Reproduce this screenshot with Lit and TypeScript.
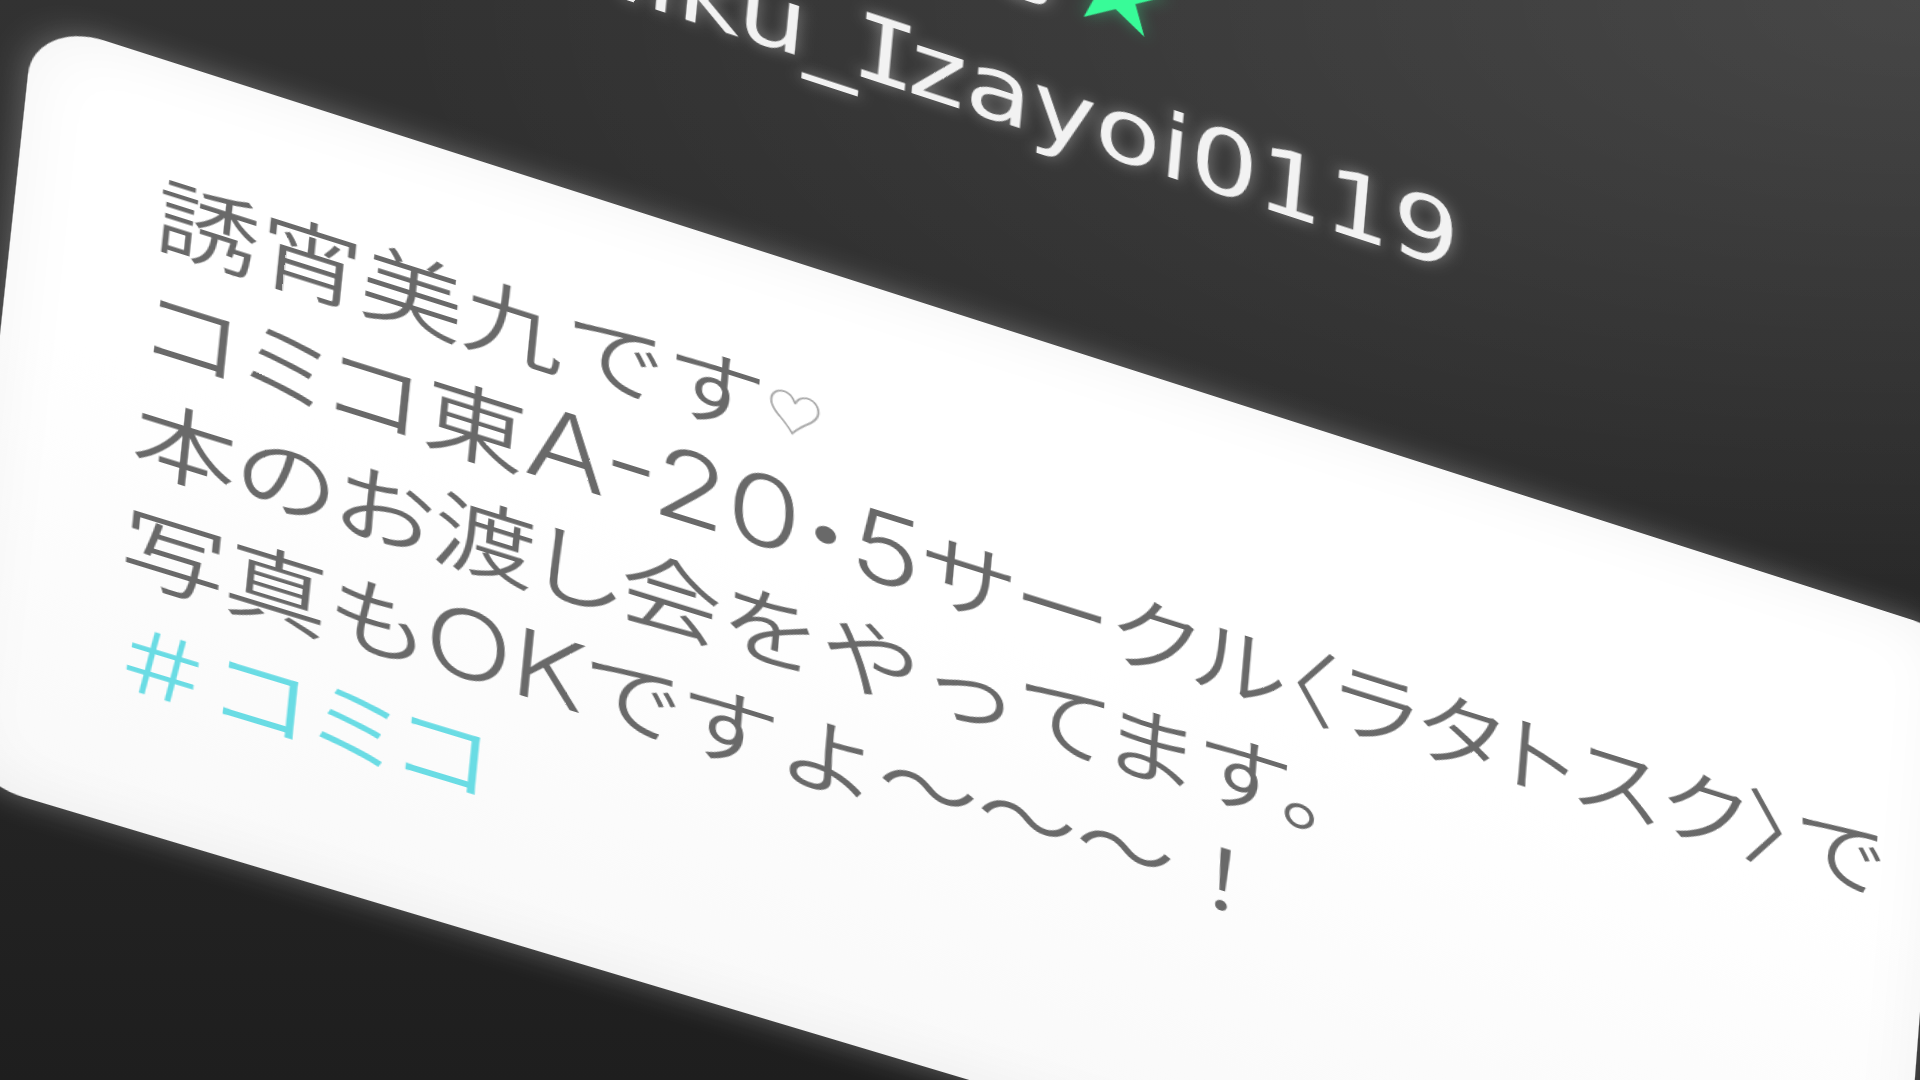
import { LitElement, html, css } from "lit";
import { customElement } from "lit/decorators.js";

@customElement("post-header")
class PostHeader extends LitElement {
  static styles = css`
    :host {
      display: flex;
      flex-direction: column;
      justify-content: flex-end;
      height: 480px;
      padding: 0 0 160px 308px;
      box-sizing: border-box;
      color: #f2f2f2;
      white-space: nowrap;
      text-shadow: 0 0 14px rgba(255, 255, 255, 0.4);
    }
    .name {
      display: flex;
      align-items: baseline;
      gap: 8px;
      margin: 0;
      font: 400 124px/140px "Noto Sans CJK JP", sans-serif;
    }
    .star {
      font-size: 88px;
      color: #38fb98;
      text-shadow: 0 0 14px rgba(56, 251, 152, 0.4);
    }
    .handle {
      margin: 0;
      font: 400 90px/152px "DejaVu Sans", sans-serif;
    }
    .serif-i {
      margin: 0 -7px;
      font-family: "DejaVu Sans Mono", monospace;
    }
  `;

  render() {
    return html`
      <h1 class="name"><span>誘宵美九</span><span class="star">★</span></h1>
      <p class="handle">@Miku_<span class="serif-i">I</span>zayoi0119</p>
    `;
  }
}

@customElement("post-card")
class PostCard extends LitElement {
  static styles = css`
    :host {
      display: block;
      box-sizing: border-box;
      padding: 91px 80px 114px 110px;
      border-radius: 56px 32px 56px 56px;
      background: linear-gradient(180deg, #ffffff 0%, #ffffff 40%, #f9f9f9 100%);
      box-shadow:
        0 0 28px rgba(255, 255, 255, 0.3),
        inset 0 0 60px rgba(0, 0, 0, 0.05);
      color: #696969;
      font: 350 82px/109px "Noto Sans CJK JP", sans-serif;
      white-space: nowrap;
    }
    p {
      margin: 0;
    }
    .tight {
      font-feature-settings: "palt";
    }
    .code,
    .word {
      font-family: "Inter", sans-serif;
      font-weight: 300;
      line-height: 1;
    }
    .code {
      font-size: 98px;
    }
    .word {
      font-size: 92px;
    }
    .heart {
      font-size: 48px;
      line-height: 1;
      vertical-align: 12px;
      color: #a8a8a8;
    }
    .tag {
      color: #6adce4;
      text-decoration: none;
    }
  `;

  render() {
    return html`
      <p>誘宵美九です<span class="heart">♡</span></p>
      <p><span class="tight">コミコ東<span class="code">A-20</span>・<span class="code">5</span>サークル〈ラタトスク〉</span>で</p>
      <p><span class="tight">本のお渡し会</span>をやっ<span class="tight">てま</span>す。</p>
      <p><span class="tight">写真も<span class="word">OK</span>で</span>すよ～～～！</p>
      <p><a class="tag" href="#comico">＃<span class="tight">コミコ</span></a></p>
    `;
  }
}

@customElement("app-root")
class AppRoot extends LitElement {
  static styles = css`
    :host {
      display: block;
      height: 100vh;
      overflow: hidden;
      background:
        radial-gradient(ellipse 80% 60% at 100% 0, rgba(255, 255, 255, 0.1), transparent),
        linear-gradient(180deg, #323232, #1e1e1e);
    }
    /* The post lies on a plane that recedes to the right; its origin is the card's top left corner. */
    .plane {
      width: calc(100vw - 320px);
      transform-origin: 0 0;
      transform: matrix3d(
          1.2646, 0.4055, 0, 0.00003464,
          -0.1079, 0.9986, 0, -0.0000155,
          0, 0, 1, 0,
          34, 18, 0, 1
        )
        translateY(-480px);
    }
  `;

  render() {
    return html`
      <article class="plane">
        <post-header></post-header>
        <post-card></post-card>
      </article>
    `;
  }
}
